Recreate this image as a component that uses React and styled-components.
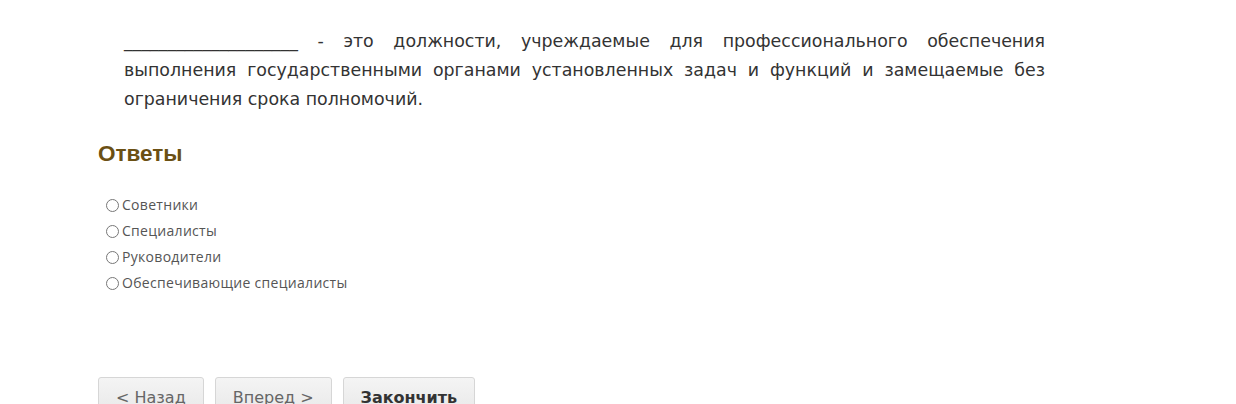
import React from 'react';
import styled, { createGlobalStyle } from 'styled-components';

const GlobalStyle = createGlobalStyle`
  html, body {
    margin: 0;
    padding: 0;
    background: #fff;
  }
`;

const Page = styled.div`
  padding: 27px 0 0 98px;
  width: 1138px;
`;

const Question = styled.p`
  margin: 0 0 0 26px;
  width: 921px;
  font-family: 'DejaVu Sans', sans-serif;
  font-size: 17.4px;
  line-height: 29px;
  color: #333;
  text-align: justify;
`;

const Heading = styled.h3`
  margin: 27px 0 0;
  font-family: 'Liberation Sans', Arial, sans-serif;
  font-size: 22.5px;
  font-weight: bold;
  color: #6b5013;
`;

const AnswerList = styled.div`
  margin: 24px 0 0 8px;
  display: flex;
  flex-direction: column;
`;

const Answer = styled.label`
  display: flex;
  align-items: center;
  height: 26px;
  font-family: 'Open Sans', sans-serif;
  font-size: 14px;
  letter-spacing: 0.3px;
  color: #555;
`;

const Radio = styled.span`
  box-sizing: border-box;
  width: 13px;
  height: 13px;
  border: 1px solid #777;
  border-radius: 50%;
  margin-right: 3px;
  margin-top: 2px;
`;

const Buttons = styled.div`
  display: flex;
  gap: 11px;
  margin-top: 82px;
`;

const Button = styled.button`
  font-family: 'DejaVu Sans', Verdana, sans-serif;
  font-size: 16px;
  font-weight: ${({ primary }) => (primary ? 'bold' : 'normal')};
  color: ${({ primary }) => (primary ? '#333' : '#666')};
  background: linear-gradient(#f4f4f4, #e8e8e8);
  border: 1px solid #d6d6d6;
  border-radius: 3px;
  padding: 9px 17px;
  height: 40px;
`;

const answers = ['Советники', 'Специалисты', 'Руководители', 'Обеспечивающие специалисты'];

export default function App() {
  return (
    <>
      <GlobalStyle />
      <Page>
        <Question>
          ____________________ - это должности, учреждаемые для профессионального обеспечения выполнения
          государственными органами установленных задач и функций и замещаемые без ограничения срока
          полномочий.
        </Question>
        <Heading>Ответы</Heading>
        <AnswerList>
          {answers.map((a) => (
            <Answer key={a}>
              <Radio />
              {a}
            </Answer>
          ))}
        </AnswerList>
        <Buttons>
          <Button>&lt; Назад</Button>
          <Button>Вперед &gt;</Button>
          <Button primary>Закончить</Button>
        </Buttons>
      </Page>
    </>
  );
}
